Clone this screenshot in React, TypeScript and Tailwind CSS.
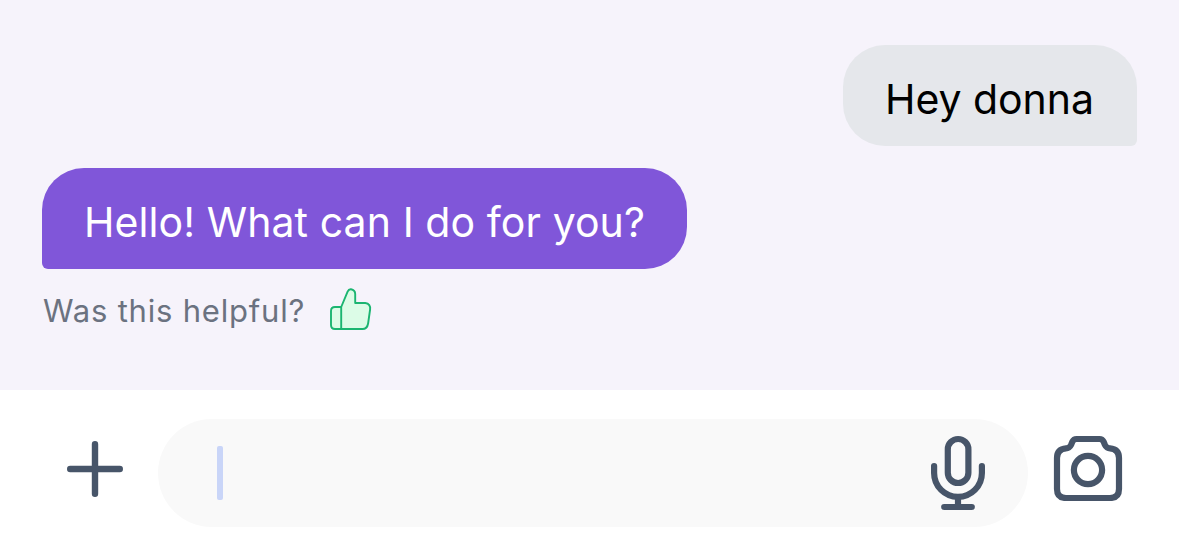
function PlusIcon() {
  return (
    <svg className="block h-14 w-14 shrink-0" viewBox="67 441 56 56" fill="none" stroke="#475569" strokeWidth="6.4" strokeLinecap="round">
      <path d="M95 444.2v49.6M70.2 469h49.6" />
    </svg>
  );
}

function MicIcon() {
  return (
    <svg className="block h-[76px] w-14 shrink-0" viewBox="930 435 56 76" fill="none" stroke="#475569" strokeWidth="6.2" strokeLinecap="round">
      <rect x="947.8" y="439" width="20.6" height="44" rx="10.3" />
      <path d="M934.1 466v7a23.9 23.9 0 0 0 47.8 0v-7M958 497v10M944.2 507h27.6" />
    </svg>
  );
}

function CameraIcon() {
  return (
    <svg className="block h-[66px] w-[70px] shrink-0" viewBox="1053 435 70 66" fill="none" stroke="#475569" strokeWidth="6.2" strokeLinejoin="round">
      <path d="M1076.5 439H1099.5Q1102.3 439 1103.6 441.6L1105 445Q1106.6 448.3 1110 448.3Q1119 449 1119 458V489Q1119 498 1110 498H1066Q1057 498 1057 489V458Q1057 449 1066 448.3Q1069.4 448.3 1071 445L1072.4 441.6Q1073.7 439 1076.5 439Z" />
      <circle cx="1088" cy="470" r="14.1" />
    </svg>
  );
}

function ThumbIcon() {
  return (
    <svg className="block h-11 w-11 shrink-0" viewBox="329 287 44 44" fill="#dcfce7" stroke="#1bb571" strokeWidth="1.9" strokeLinejoin="round">
      <path d="M341.2 307L347.6 291.6Q348.7 289 351 289.2Q355.2 290 355.2 294V303H365.2Q370.9 303.8 370.1 309.5L368.1 323.5Q367.2 329 362.5 329H335Q331 329 331 325V311Q331 307 335 307Z" />
      <path d="M341.2 307v22" />
    </svg>
  );
}

export default function App() {
  return (
    <div className="flex h-[550px] w-[1179px] flex-col overflow-hidden bg-[#f6f3fb] font-['Inter',sans-serif]">
      <main className="flex h-[390px] shrink-0 flex-col px-[42px] pt-[45px]">
        <div className="flex h-[101px] w-[294px] items-center self-end rounded-[42px] rounded-br-[6px] bg-[#e5e7eb] px-[42px] pt-2 text-[41px] whitespace-nowrap text-black">
          <span className="font-[370] tracking-[-0.05px]">Hey donna</span>
        </div>
        <div className="mt-[22px] flex h-[101px] w-[645px] items-center rounded-[42px] rounded-bl-[6px] bg-[#8056d9] px-[42px] pt-2 text-[41px] whitespace-nowrap text-white">
          <span className="font-[370] tracking-[0.08px]">Hello! What can I do for you?</span>
        </div>
        <div className="mt-[18px] flex h-11 items-center">
          <span className="w-[287px] pt-1 pl-px text-[31px] tracking-[0.8px] whitespace-nowrap text-[#6b7280]">Was this helpful?</span>
          <ThumbIcon />
        </div>
      </main>
      <footer className="flex h-40 shrink-0 items-start bg-white pt-[29px] pl-[67px]">
        <div className="mt-[22px]"><PlusIcon /></div>
        <div className="ml-[35px] flex h-[108px] w-[870px] items-start justify-between rounded-full bg-[#f9f9f9] pr-[42px] pl-[59px]">
          <div className="mt-[27px] h-[54px] w-[6px] rounded-[2px] bg-[#c9d5f8]" />
          <div className="mt-4"><MicIcon /></div>
        </div>
        <div className="mt-4 ml-[25px]"><CameraIcon /></div>
      </footer>
    </div>
  );
}
